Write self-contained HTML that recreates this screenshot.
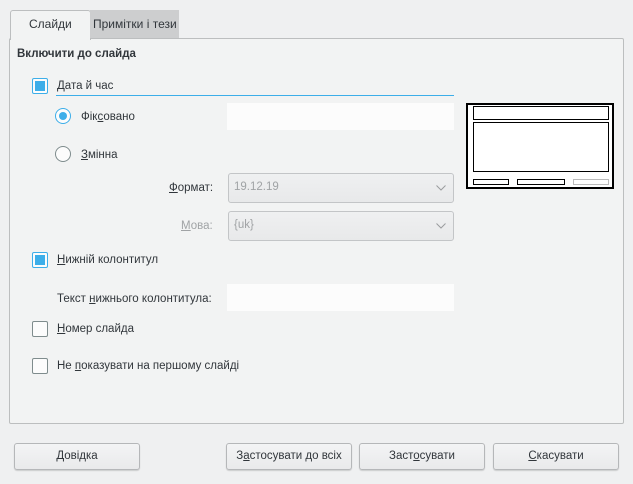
<!DOCTYPE html><html><head><meta charset="utf-8"><style>
body{margin:0;width:633px;height:484px;background:#eff0f1;font-family:"Liberation Sans","DejaVu Sans",sans-serif;font-size:11.5px;color:#31363b;position:relative;overflow:hidden}
.a{position:absolute}
.t{position:absolute;line-height:14px;white-space:nowrap}
.cb{position:absolute;width:14px;height:14px;border:1px solid #7f8c8d;border-radius:2px;background:#fcfcfc}
.cb.on{border-color:#3daee9}
.cb.on:after{content:"";position:absolute;left:2px;top:2px;width:10px;height:10px;background:#3daee9}
.rb{position:absolute;width:14px;height:14px;border:1px solid #7f8c8d;border-radius:50%;background:#fcfcfc}
.rb.on{border-color:#3daee9}
.rb.on:after{content:"";position:absolute;left:3px;top:3px;width:8px;height:8px;border-radius:50%;background:#3daee9}
.in{position:absolute;background:#fcfcfc}
.cmb{position:absolute;left:228px;width:224px;height:28px;border:1px solid #c3c5c7;border-radius:3px;background:linear-gradient(#eff0f1,#e8e9ea);color:#a0a3a5}
.cmb span{position:absolute;left:5px;top:7px}
.cmb svg{position:absolute;right:7px;top:11px}
.btn{position:absolute;top:443px;width:124px;height:25px;border:1px solid #b5b7b9;border-radius:3px;background:linear-gradient(#f3f4f5,#e9eaeb);text-align:center;line-height:25px;box-shadow:0 1px 1px rgba(0,0,0,.15)}
u{text-decoration:underline}
</style></head><body>
<div class="a" style="left:9px;top:38px;width:613px;height:384px;border:1px solid #bcbebf;border-radius:2px;background:#f2f3f3"></div>
<div class="a" style="left:10px;top:10px;width:79px;height:29px;border:1px solid #bcbebf;border-bottom:none;border-radius:3px 3px 0 0;background:#f2f3f3"></div>
<div class="t" style="left:29px;top:17px;font-size:12px">Слайди</div>
<div class="a" style="left:90px;top:10px;width:89px;height:28px;background:#cdcecf"></div>
<div class="t" style="left:93px;top:17px;font-size:12px">Примітки і тези</div>
<div class="t" style="left:17px;top:47px;font-weight:bold">Включити до слайда</div>
<div class="cb on" style="left:32px;top:78px"></div>
<div class="t" style="left:57px;top:79px"><u>Д</u>ата й час</div>
<div class="a" style="left:56px;top:95px;width:398px;height:1px;background:#3daee9"></div>
<div class="rb on" style="left:55px;top:108px"></div>
<div class="t" style="left:81px;top:110px">Фік<u>с</u>овано</div>
<div class="in" style="left:227px;top:103px;width:227px;height:27px"></div>
<div class="rb" style="left:55px;top:146px"></div>
<div class="t" style="left:81px;top:148px"><u>З</u>мінна</div>
<div class="t" style="left:169px;top:181px"><u>Ф</u>ормат:</div>
<div class="cmb" style="top:173px"><span>19.12.19</span><svg width="10" height="6"><path d="M0.5 .5L5 5L9.5 .5" stroke="#9a9c9e" fill="none"/></svg></div>
<div class="t" style="left:181px;top:219px;color:#a0a3a5"><u>М</u>ова:</div>
<div class="cmb" style="top:211px"><span>{uk}</span><svg width="10" height="6"><path d="M0.5 .5L5 5L9.5 .5" stroke="#9a9c9e" fill="none"/></svg></div>
<svg class="a" style="left:466px;top:103px" width="150" height="88">
<rect x="1" y="1" width="146" height="84" fill="#fff" stroke="#000" stroke-width="2"/>
<rect x="7.5" y="3.5" width="135" height="13" fill="none" stroke="#000"/>
<rect x="7.5" y="19.5" width="135" height="49" fill="none" stroke="#000"/>
<rect x="7.5" y="76.5" width="35" height="5" fill="none" stroke="#000"/>
<rect x="51.5" y="76.5" width="47" height="5" fill="none" stroke="#000"/>
<rect x="107.5" y="76.5" width="35" height="5" fill="none" stroke="#bbb"/>
</svg>
<div class="cb on" style="left:32px;top:252px"></div>
<div class="t" style="left:57px;top:253px"><u>Н</u>ижній колонтитул</div>
<div class="t" style="left:57px;top:292px">Текст <u>н</u>ижнього колонтитула:</div>
<div class="in" style="left:227px;top:284px;width:227px;height:27px"></div>
<div class="cb" style="left:32px;top:321px"></div>
<div class="t" style="left:57px;top:322px"><u>Н</u>омер слайда</div>
<div class="cb" style="left:32px;top:358px"></div>
<div class="t" style="left:57px;top:359px">Не <u>п</u>оказувати на першому слайді</div>
<div class="btn" style="left:14px"><u>Д</u>овідка</div>
<div class="btn" style="left:226px">З<u>а</u>стосувати до всіх</div>
<div class="btn" style="left:359px">Заст<u>о</u>сувати</div>
<div class="btn" style="left:493px"><u>С</u>касувати</div>
</body></html>
